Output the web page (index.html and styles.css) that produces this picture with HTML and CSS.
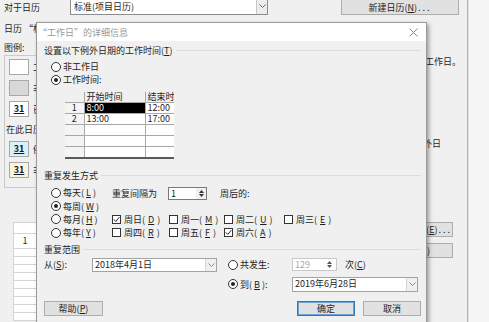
FILE: index.html
```html
<!DOCTYPE html>
<html>

<head>
    <title>更改工作时间</title>
    <link rel="stylesheet" href="styles.css">
</head>

<body>
<div class="screen">
    <div class="window">
        <div class="top-row">
            <span class="top-label">对于日历</span>
            <div class="combo combo-cal">
                <span class="combo-text">标准(项目日历)</span>
                <span class="drop"><svg width="7" height="4" viewBox="0 0 7 4"><path d="M0.5 0.5 L3.5 3.5 L6.5 0.5" fill="none" stroke="#666"/></svg></span>
            </div>
            <button class="btn btn-new">新建日历(<u>N</u>)<span class="dots">...</span></button>
        </div>
        <p class="cal-note">日历 “标准”为基准日历。</p>

        <div class="main">
            <div class="left">
                <p class="legend-title">图例:</p>
                <div class="legend">
                    <div class="legend-item"><span class="swatch"></span>工作日</div>
                    <div class="legend-item"><span class="swatch gray"></span>非工作日</div>
                    <div class="legend-item"><span class="swatch num">31</span>已编辑的工作时间</div>
                    <div class="legend-sub">在此日历上:</div>
                    <div class="legend-item"><span class="swatch num cyan">31</span>例外日</div>
                    <div class="legend-item"><span class="swatch num yellow">31</span>非默认工作周</div>
                </div>
                <table class="ex-table">
                    <tr class="ex-head"><td></td><td>名称</td></tr>
                    <tr class="ex-first"><td>1</td><td>工作日</td></tr>
                    <tr><td></td><td></td></tr>
                    <tr><td></td><td></td></tr>
                    <tr><td></td><td></td></tr>
                    <tr><td></td><td></td></tr>
                    <tr><td></td><td></td></tr>
                    <tr><td></td><td></td></tr>
                    <tr><td></td><td></td></tr>
                    <tr><td></td><td></td></tr>
                    <tr><td></td><td></td></tr>
                </table>
            </div>
            <div class="right">
                <p class="note note-day">工作日。</p>
                <p class="note note-ex">例外日</p>
                <button class="btn side-btn btn-detail">详细信息(<u>E</u>)<span class="dots">...</span></button>
                <button class="btn side-btn btn-del">删除(<u>D</u>)</button>
            </div>
        </div>
    </div>
    <div class="desk"></div>

    <div class="dialog">
        <div class="dlg-title">
            <span>“工作日”的详细信息</span>
            <svg class="close" width="9" height="9" viewBox="0 0 9 9"><path d="M0.5 0.5 L8.5 8.5 M8.5 0.5 L0.5 8.5" stroke="#8c8c8c" stroke-width="1"/></svg>
        </div>
        <div class="dlg-body">
            <div class="group-title"><span>设置以下例外日期的工作时间(<u>T</u>)</span></div>
            <div class="radio-row first"><span class="radio"></span>非工作日</div>
            <div class="radio-row"><span class="radio on"></span>工作时间:</div>

            <table class="time-table">
                <colgroup><col class="c-num"><col class="c-start"><col class="c-end"></colgroup>
                <tr class="head"><td></td><td>开始时间</td><td>结束时间</td></tr>
                <tr><td class="num">1</td><td class="sel">8:00</td><td>12:00</td></tr>
                <tr><td class="num">2</td><td>13:00</td><td>17:00</td></tr>
                <tr><td class="num"></td><td></td><td></td></tr>
                <tr><td class="num"></td><td></td><td></td></tr>
                <tr><td class="num"></td><td></td><td></td></tr>
            </table>

            <div class="group-title second"><span>重复发生方式</span></div>
            <div class="recur">
                <div class="recur-kinds">
                    <div class="radio-row"><span class="radio"></span>每天(<u>L</u>)</div>
                    <div class="radio-row"><span class="radio on"></span>每周(<u>W</u>)</div>
                    <div class="radio-row"><span class="radio"></span>每月(<u>H</u>)</div>
                    <div class="radio-row"><span class="radio"></span>每年(<u>Y</u>)</div>
                </div>
                <div class="recur-detail">
                    <div class="interval">
                        <span class="interval-label">重复间隔为</span>
                        <div class="spin">
                            <span class="spin-val">1</span>
                            <span class="spin-btns">
                                <svg width="5" height="3" viewBox="0 0 5 3"><path d="M0 3 L2.5 0 L5 3z" fill="#333"/></svg>
                                <svg width="5" height="3" viewBox="0 0 5 3"><path d="M0 0 L2.5 3 L5 0z" fill="#333"/></svg>
                            </span>
                        </div>
                        <span class="interval-after">周后的:</span>
                    </div>
                    <div class="days">
                        <div class="check-item"><span class="check on"><svg width="7" height="7" viewBox="0 0 7 7"><path d="M0.8 3.4 L2.8 5.4 L6.3 1.2" fill="none" stroke="#222" stroke-width="1"/></svg></span>周日(<u>D</u>)</div>
                        <div class="check-item"><span class="check"></span>周一(<u>M</u>)</div>
                        <div class="check-item"><span class="check"></span>周二(<u>U</u>)</div>
                        <div class="check-item"><span class="check"></span>周三(<u>E</u>)</div>
                        <div class="check-item"><span class="check"></span>周四(<u>R</u>)</div>
                        <div class="check-item"><span class="check"></span>周五(<u>F</u>)</div>
                        <div class="check-item"><span class="check on"><svg width="7" height="7" viewBox="0 0 7 7"><path d="M0.8 3.4 L2.8 5.4 L6.3 1.2" fill="none" stroke="#222" stroke-width="1"/></svg></span>周六(<u>A</u>)</div>
                    </div>
                </div>
            </div>

            <div class="group-title"><span>重复范围</span></div>
            <div class="range-row first">
                <span class="range-label">从(<u>S</u>):</span>
                <div class="combo date">
                    <span class="combo-text">2018年4月1日</span>
                    <span class="drop"><svg width="7" height="4" viewBox="0 0 7 4"><path d="M0.5 0.5 L3.5 3.5 L6.5 0.5" fill="none" stroke="#888"/></svg></span>
                </div>
                <div class="radio-row range-radio"><span class="radio"></span>共发生:</div>
                <div class="spin off">
                    <span class="spin-val">129</span>
                    <span class="spin-btns">
                        <svg width="5" height="3" viewBox="0 0 5 3"><path d="M0 3 L2.5 0 L5 3z" fill="#555"/></svg>
                        <svg width="5" height="3" viewBox="0 0 5 3"><path d="M0 0 L2.5 3 L5 0z" fill="#555"/></svg>
                    </span>
                </div>
                <span class="times">次(<u>C</u>)</span>
            </div>
            <div class="range-row second">
                <div class="radio-row range-radio"><span class="radio on"></span>到(<u>B</u>):</div>
                <div class="combo date date-end">
                    <span class="combo-text">2019年6月28日</span>
                    <span class="drop"><svg width="7" height="4" viewBox="0 0 7 4"><path d="M0.5 0.5 L3.5 3.5 L6.5 0.5" fill="none" stroke="#888"/></svg></span>
                </div>
            </div>

            <div class="dlg-buttons">
                <button class="btn dlg-btn">帮助(<u>P</u>)</button>
                <button class="btn dlg-btn btn-ok">确定</button>
                <button class="btn dlg-btn btn-cancel">取消</button>
            </div>
        </div>
    </div>
</div>
</body>
</html>
```

FILE: styles.css
```css
body {
    margin: 0;
    font-family: "Noto Sans CJK SC", sans-serif;
    font-size: 9px;
    line-height: 13px;
    color: #1e1e1e;
    background-color: #f0f0f0;
    overflow: hidden;
}

p {
    margin: 0;
}

u {
    text-decoration: underline;
}

.dots {
    letter-spacing: 2px;
    margin-left: 1px;
}

.screen {
    position: relative;
    display: flex;
    width: 489px;
    height: 322px;
    overflow: hidden;
}

/* background window */

.window {
    width: 468px;
    height: 322px;
    box-sizing: border-box;
    border-right: 1px solid #b4b4b4;
    background-color: #f0f0f0;
}

.desk {
    flex: 1;
    background-color: #f5f5f5;
    border-left: 1px solid #e2e2e2;
}

.top-row {
    display: flex;
    align-items: center;
    height: 18px;
    margin-top: -3px;
}

.top-label {
    width: 66px;
    padding-left: 4px;
    padding-top: 3px;
}

.combo {
    display: flex;
    align-items: stretch;
    box-sizing: border-box;
    background-color: #fff;
    border: 1px solid #8c8c8c;
}

.combo-text {
    flex: 1;
    padding-left: 2px;
    white-space: nowrap;
    overflow: hidden;
}

.drop {
    display: flex;
    align-items: center;
    justify-content: center;
    width: 10px;
    background-color: #ececec;
    border-left: 1px solid #c8c8c8;
}

.combo-cal {
    width: 198px;
    height: 18px;
    line-height: 16px;
}

.combo-cal .combo-text {
    padding-left: 3px;
    padding-top: 1px;
}

.btn {
    font-family: "Noto Sans CJK SC", sans-serif;
    font-size: 9px;
    line-height: 13px;
    color: #1e1e1e;
    background-color: #e1e1e1;
    border: 1px solid #adadad;
    padding: 0;
    white-space: nowrap;
}

.btn-new {
    width: 118px;
    height: 17px;
    margin-left: auto;
    margin-right: 8px;
    padding-top: 2px;
}

.cal-note {
    margin-top: 7px;
    padding-left: 4px;
    white-space: nowrap;
}

.main {
    display: flex;
}

.left {
    flex: 1;
}

.legend-title {
    margin-top: 6px;
    padding-left: 4px;
}

.legend {
    display: flex;
    flex-direction: column;
    gap: 5px;
    height: 133px;
    box-sizing: border-box;
    margin: 1px 0 0 4px;
    padding: 3px 0 0 4px;
    border: 1px solid #cacaca;
    border-right: none;
}

.legend-item {
    display: flex;
    align-items: center;
    gap: 4px;
    height: 16px;
    white-space: nowrap;
}

.legend-sub {
    margin-top: 1px;
    margin-left: -4px;
    padding-left: 1px;
    white-space: nowrap;
}

.swatch {
    width: 20px;
    height: 16px;
    box-sizing: border-box;
    border: 1px solid #a8a8a8;
    background-color: #fff;
}

.swatch.gray {
    background-color: #d8d8d8;
}

.swatch.num {
    font-weight: bold;
    text-decoration: underline;
    text-align: center;
    line-height: 14px;
    color: #14142a;
}

.swatch.cyan {
    background-color: #d9f2f8;
}

.swatch.yellow {
    background-color: #faf5da;
}

.ex-table {
    margin: 34px 0 0 13px;
    border-collapse: collapse;
    background-color: #fff;
    table-layout: fixed;
    width: 200px;
}

.ex-table td {
    height: 7px;
    padding: 0;
    border: 1px solid #d4d4d4;
    font-size: 8px;
    line-height: 7px;
    text-align: center;
}

.ex-table td:first-child {
    width: 22px;
}

.ex-table .ex-head td {
    height: 10px;
    color: transparent;
}

.ex-table .ex-first td {
    height: 14px;
    line-height: 14px;
    font-size: 9px;
}

.right {
    width: 46px;
    padding-right: 7px;
}

.note {
    white-space: nowrap;
}

.note-day {
    padding-top: 20px;
    padding-left: 11px;
}

.note-ex {
    margin-top: 69px;
}

.side-btn {
    display: block;
    width: 80px;
    height: 15px;
    margin-left: -41px;
    text-align: right;
}

.btn-detail {
    margin-top: 72px;
    padding-right: 0;
}

.btn-del {
    margin-top: 6px;
    padding-right: 22px;
}

/* details dialog */

.dialog {
    position: absolute;
    left: 36px;
    top: 22px;
    width: 391px;
    height: 310px;
    box-sizing: border-box;
    border: 1px solid #9a9a9a;
    background-color: #f0f0f0;
    box-shadow: 2px 2px 4px rgba(0, 0, 0, 0.35);
}

.dlg-title {
    display: flex;
    align-items: center;
    height: 18px;
    padding-left: 1px;
    background-color: #fff;
    color: #9a9a9a;
}

.close {
    margin-left: auto;
    margin-right: 8px;
}

.dlg-body {
    padding: 0 5px 0 7px;
}

.group-title {
    display: flex;
    align-items: center;
    gap: 3px;
    margin-top: 3px;
    white-space: nowrap;
}

.group-title::after {
    content: "";
    flex: 1;
    height: 1px;
    background-color: #dcdcdc;
}

.group-title.second {
    margin-top: 10px;
}

.radio-row {
    display: flex;
    align-items: center;
    gap: 2px;
    height: 13px;
    padding-left: 7px;
    white-space: nowrap;
}

.radio-row.first {
    margin-top: 3px;
}

.radio {
    width: 10px;
    height: 10px;
    box-sizing: border-box;
    border: 1px solid #333;
    border-radius: 50%;
    background-color: #fff;
    display: flex;
    align-items: center;
    justify-content: center;
}

.radio.on::after {
    content: "";
    width: 4px;
    height: 4px;
    border-radius: 50%;
    background-color: #222;
}

.time-table {
    margin: 6px 0 0 21px;
    border-collapse: collapse;
    table-layout: fixed;
    width: 109px;
    border-bottom: 2px solid #5a5a5a;
}

.c-num {
    width: 19px;
}

.c-start {
    width: 61px;
}

.c-end {
    width: 29px;
}

.time-table td {
    height: 10px;
    padding: 0 0 0 2px;
    border: 1px solid #a8a8a8;
    background-color: #fff;
    line-height: 10px;
    white-space: nowrap;
    overflow-x: clip;
    overflow-y: visible;
}

.time-table tr:first-child td {
    border-top: none;
}

.time-table td:first-child {
    border-left: none;
}

.time-table td:last-child {
    border-right: none;
}

.time-table .head td {
    background-color: #f0f0f0;
}

.time-table .num {
    padding: 0;
    text-align: center;
    background-color: #f4f4f4;
}

.time-table .sel {
    background-color: #000;
    color: #fff;
}

.recur {
    display: flex;
    margin-top: 4px;
}

.recur-kinds {
    width: 68px;
}

.recur-kinds .radio-row {
    height: 13.4px;
}

.recur-detail {
    flex: 1;
}

.interval {
    display: flex;
    align-items: center;
    height: 14px;
}

.interval-label {
    width: 56px;
}

.interval-after {
    margin-left: 13px;
}

.spin {
    display: flex;
    align-items: stretch;
    width: 39px;
    height: 13px;
    box-sizing: border-box;
    border: 1px solid #7a7a7a;
    background-color: #fff;
}

.spin-val {
    flex: 1;
    padding-left: 2px;
    line-height: 11px;
}

.spin-btns {
    display: flex;
    flex-direction: column;
    align-items: center;
    justify-content: center;
    gap: 1px;
    width: 10px;
    background-color: #f0f0f0;
}

.spin.off {
    width: 45px;
    border-color: #c9c9c9;
    color: #a8a8a8;
}

.spin.off .spin-btns {
    width: 13px;
    background-color: #fff;
}

.days {
    display: grid;
    grid-template-columns: 57px 55px 60px auto;
    grid-auto-rows: 13px;
    margin-top: 13px;
}

.check-item {
    display: flex;
    align-items: center;
    gap: 3px;
    white-space: nowrap;
}

.check {
    display: flex;
    align-items: center;
    justify-content: center;
    width: 9px;
    height: 9px;
    box-sizing: border-box;
    border: 1px solid #333;
    background-color: #fff;
}

.range-row {
    display: flex;
    align-items: center;
    white-space: nowrap;
}

.range-row.first {
    height: 14px;
    margin-top: 2px;
}

.range-row.second {
    height: 15px;
    margin-top: 5px;
    padding-left: 184px;
}

.range-label {
    width: 48px;
}

.date {
    width: 125px;
    height: 14px;
    line-height: 12px;
    border-color: #a3a3a3;
}

.date .drop {
    background-color: #f0f0f0;
    border-left-color: #d6d6d6;
}

.date-end {
    width: 126px;
    height: 15px;
}

.range-radio {
    width: 64px;
    box-sizing: border-box;
    padding-left: 0;
}

.range-row.first .range-radio {
    margin-left: 11px;
}

.times {
    margin-left: 8px;
}

.dlg-buttons {
    display: flex;
    margin-top: 9px;
}

.dlg-btn {
    width: 59px;
    height: 15px;
}

.btn-ok {
    width: 58px;
    margin-left: auto;
    border-color: #2f78b5;
    box-shadow: inset 0 0 0 1px #6aa3d6;
}

.btn-cancel {
    width: 58px;
    margin-left: 8px;
}
```
